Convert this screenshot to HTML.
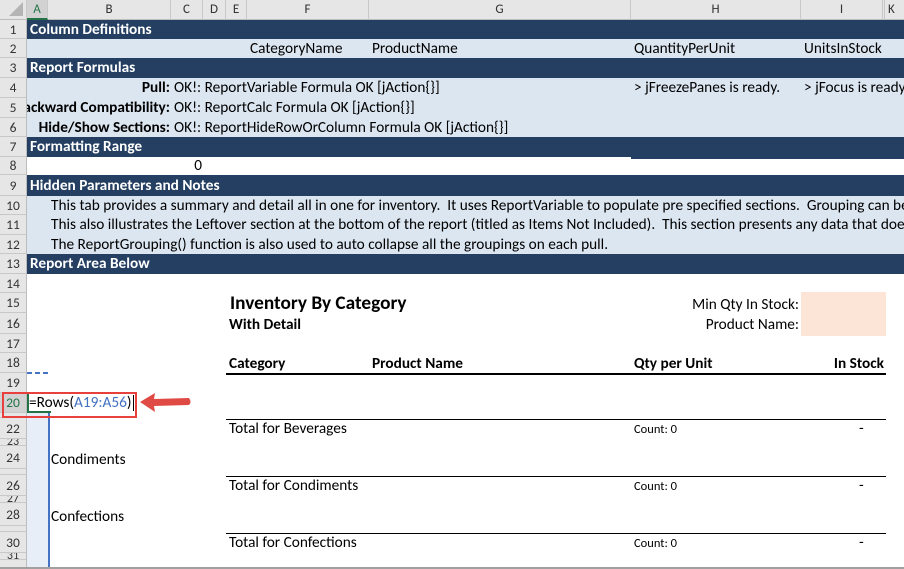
<!DOCTYPE html>
<html><head><style>
body{margin:0;width:904px;height:569px;overflow:hidden;background:#fff;font-family:Calibri,"Liberation Sans",sans-serif;font-size:15.3px;position:relative}
div{position:absolute;box-sizing:border-box;white-space:nowrap}
.ch{top:0;height:20px;background:#e6e6e6;border-right:1px solid #c8c8c8;border-bottom:1px solid #bcbcbc;text-align:center;line-height:20px;color:#333;font-size:13px}
.rh{left:0;width:27px;background:#e6e6e6;border-bottom:1px solid #c8c8c8;border-right:1px solid #bcbcbc;text-align:center;color:#333;font-size:13.5px;overflow:hidden}
.dk{left:27px;right:0;background:#243f61;color:#fff;font-weight:bold;padding-left:3px}
.lt{left:27px;right:0;background:#dce6f1}
.t{color:#000}
.b{font-weight:bold}
.hl{height:1px;background:#000}
.ra{display:flex;justify-content:flex-end;overflow:hidden}
</style></head><body>
<!-- column headers -->
<div class="ch" style="left:0;width:27px;background:#e6e6e6"><svg width="14" height="14" style="position:absolute;right:3px;bottom:3px"><polygon points="14,0 14,14 0,14" fill="#b4b4b4"/></svg></div>
<div class="ch" style="left:27px;width:21px;background:#d2d2d2;border-bottom:2px solid #217346;color:#217346">A</div>
<div class="ch" style="left:48px;width:123px">B</div>
<div class="ch" style="left:171px;width:32px">C</div>
<div class="ch" style="left:203px;width:23px">D</div>
<div class="ch" style="left:226px;width:21px">E</div>
<div class="ch" style="left:247px;width:122px">F</div>
<div class="ch" style="left:369px;width:262px">G</div>
<div class="ch" style="left:631px;width:170px">H</div>
<div class="ch" style="left:801px;width:82px">I</div>
<div class="ch" style="left:883px;width:2px;background:#e6e6e6"></div>
<div class="ch" style="left:885px;width:30px;text-align:left;padding-left:3px">K</div>

<!-- row headers -->
<div class="rh" style="top:20px;height:19px;line-height:19px">1</div>
<div class="rh" style="top:39px;height:19px;line-height:19px">2</div>
<div class="rh" style="top:58px;height:20px;line-height:20px">3</div>
<div class="rh" style="top:78px;height:20px;line-height:20px">4</div>
<div class="rh" style="top:98px;height:20px;line-height:20px">5</div>
<div class="rh" style="top:118px;height:19px;line-height:19px">6</div>
<div class="rh" style="top:137px;height:20px;line-height:20px">7</div>
<div class="rh" style="top:157px;height:18px;line-height:18px">8</div>
<div class="rh" style="top:175px;height:21px;line-height:21px">9</div>
<div class="rh" style="top:196px;height:19px;line-height:19px">10</div>
<div class="rh" style="top:215px;height:20px;line-height:20px">11</div>
<div class="rh" style="top:235px;height:19px;line-height:19px">12</div>
<div class="rh" style="top:254px;height:20px;line-height:20px">13</div>
<div class="rh" style="top:274px;height:19px;line-height:19px">14</div>
<div class="rh" style="top:293px;height:20px;line-height:20px">15</div>
<div class="rh" style="top:313px;height:21px;line-height:21px">16</div>
<div class="rh" style="top:334px;height:19px;line-height:19px">17</div>
<div class="rh" style="top:353px;height:20px;line-height:20px">18</div>
<div class="rh" style="top:373px;height:20px;line-height:20px">19</div>
<div class="rh" style="top:393px;height:20px;line-height:20px;background:#d2d2d2;color:#217346">20</div>
<div class="rh" style="top:413px;height:5px"></div>
<div class="rh" style="top:418px;height:21px;line-height:21px">22</div>
<div class="rh" style="top:439px;height:7px;line-height:7px;font-size:12px">23</div>
<div class="rh" style="top:446px;height:23px;line-height:23px">24</div>
<div class="rh" style="top:469px;height:6px"></div>
<div class="rh" style="top:475px;height:21px;line-height:21px">26</div>
<div class="rh" style="top:496px;height:7px;line-height:7px;font-size:12px">27</div>
<div class="rh" style="top:503px;height:23px;line-height:23px">28</div>
<div class="rh" style="top:526px;height:6px"></div>
<div class="rh" style="top:532px;height:21px;line-height:21px">30</div>
<div class="rh" style="top:553px;height:7px;line-height:7px;font-size:12px">31</div>
<div class="rh" style="top:560px;height:9px"></div>

<!-- bands -->
<div class="dk" style="top:20px;height:19px;line-height:19px">Column Definitions</div>
<div class="lt" style="top:39px;height:19px"></div>
<div class="t" style="left:250px;top:39px;line-height:19px">CategoryName</div>
<div class="t" style="left:372px;top:39px;line-height:19px">ProductName</div>
<div class="t" style="left:634px;top:39px;line-height:19px">QuantityPerUnit</div>
<div class="t" style="left:804px;top:39px;line-height:19px">UnitsInStock</div>
<div class="dk" style="top:58px;height:20px;line-height:20px">Report Formulas</div>
<div class="lt" style="top:78px;height:59px"></div>
<div class="t b ra" style="left:27px;width:143px;top:78px;line-height:20px"><span>Pull:</span></div>
<div class="t b ra" style="left:27px;width:143px;top:98px;line-height:20px"><span>Backward Compatibility:</span></div>
<div class="t b ra" style="left:27px;width:143px;top:118px;line-height:19px"><span>Hide/Show Sections:</span></div>
<div class="t" style="left:174px;top:78px;line-height:20px">OK!: ReportVariable Formula OK [jAction{}]</div>
<div class="t" style="left:174px;top:98px;line-height:20px">OK!: ReportCalc Formula OK [jAction{}]</div>
<div class="t" style="left:174px;top:118px;line-height:19px">OK!: ReportHideRowOrColumn Formula OK [jAction{}]</div>
<div class="t" style="left:634px;top:78px;line-height:20px">&gt; jFreezePanes is ready.</div>
<div class="t" style="left:804px;top:78px;line-height:20px">&gt; jFocus is ready</div>
<div class="dk" style="top:137px;height:20px;line-height:20px">Formatting Range</div>
<div style="left:631px;right:0;top:157px;height:2px;background:#243f61"></div>
<div class="t" style="left:171px;width:31px;text-align:right;top:157px;line-height:18px">0</div>
<div class="dk" style="top:175px;height:21px;line-height:21px">Hidden Parameters and Notes</div>
<div class="lt" style="top:196px;height:58px"></div>
<div class="t" style="left:51px;top:196px;line-height:19px">This tab provides a summary and detail all in one for inventory.&nbsp; It uses ReportVariable to populate pre specified sections.&nbsp; Grouping can be</div>
<div class="t" style="left:51px;top:215px;line-height:20px">This also illustrates the Leftover section at the bottom of the report (titled as Items Not Included).&nbsp; This section presents any data that does</div>
<div class="t" style="left:51px;top:235px;line-height:19px">The ReportGrouping() function is also used to auto collapse all the groupings on each pull.</div>
<div class="dk" style="top:254px;height:20px;line-height:20px">Report Area Below</div>

<!-- report -->
<div class="t b" style="left:230px;top:293px;font-size:19.3px;line-height:22px">Inventory By Category</div>
<div class="t b" style="left:229px;top:316px;line-height:18px">With Detail</div>
<div class="t" style="left:600px;width:199px;text-align:right;top:295px;line-height:20px">Min Qty In Stock:</div>
<div class="t" style="left:600px;width:199px;text-align:right;top:315px;line-height:20px">Product Name:</div>
<div style="left:801px;top:292px;width:85px;height:44px;background:#fce4d6"></div>
<div class="t b" style="left:229px;top:354px;line-height:19px">Category</div>
<div class="t b" style="left:372px;top:354px;line-height:19px">Product Name</div>
<div class="t b" style="left:634px;top:354px;line-height:19px">Qty per Unit</div>
<div class="t b" style="left:801px;width:83px;text-align:right;top:354px;line-height:19px">In Stock</div>
<div class="hl" style="left:226px;width:660px;top:373px;height:2px"></div>
<div class="hl" style="left:226px;width:660px;top:419px"></div>
<div class="hl" style="left:226px;width:660px;top:476px"></div>
<div class="hl" style="left:226px;width:660px;top:533px"></div>
<div class="t" style="left:229px;top:420px;line-height:18px">Total for Beverages</div>
<div class="t" style="left:229px;top:477px;line-height:18px">Total for Condiments</div>
<div class="t" style="left:229px;top:534px;line-height:18px">Total for Confections</div>
<div class="t" style="left:634px;top:422px;font-size:12.5px;line-height:16px">Count: 0</div>
<div class="t" style="left:634px;top:479px;font-size:12.5px;line-height:16px">Count: 0</div>
<div class="t" style="left:634px;top:536px;font-size:12.5px;line-height:16px">Count: 0</div>
<div class="t" style="left:859px;top:420px;line-height:18px">-</div>
<div class="t" style="left:859px;top:477px;line-height:18px">-</div>
<div class="t" style="left:859px;top:534px;line-height:18px">-</div>
<div class="t" style="left:51px;top:450px;line-height:20px">Condiments</div>
<div class="t" style="left:51px;top:507px;line-height:20px">Confections</div>

<!-- column A fill & blue line -->
<div style="left:27px;top:413px;width:21px;height:156px;background:#e8eef8"></div>
<div style="left:48px;top:413px;width:2px;height:156px;background:#4472c4"></div>
<div style="left:27px;top:372px;width:24px;height:2px;background:repeating-linear-gradient(90deg,#4472c4 0 5px,transparent 5px 8px)"></div>
<div style="left:0;right:0;top:567px;height:2px;background:#a0a0a0"></div>

<!-- active cell -->
<div style="left:27px;top:393px;width:24px;height:20px;border:2px solid #217346;border-top:none;border-right:none;background:#fff"></div>
<div class="t" style="left:29px;top:393px;line-height:19px">=Rows(<span style="color:#4472c4">A19:A56</span>)<span style="display:inline-block;width:1px;height:16px;background:#000;vertical-align:middle;margin-left:1px"></span></div>
<div style="left:2px;top:392px;width:135px;height:26px;border:2px solid #e8403c"></div>
<svg style="position:absolute;left:137px;top:390px" width="56" height="26"><path d="M3 12 L18 3 L17 9 L52 8 Q55 12 52 15 L17 16 L18 22 Z" fill="#e04a44"/></svg>
</body></html>
